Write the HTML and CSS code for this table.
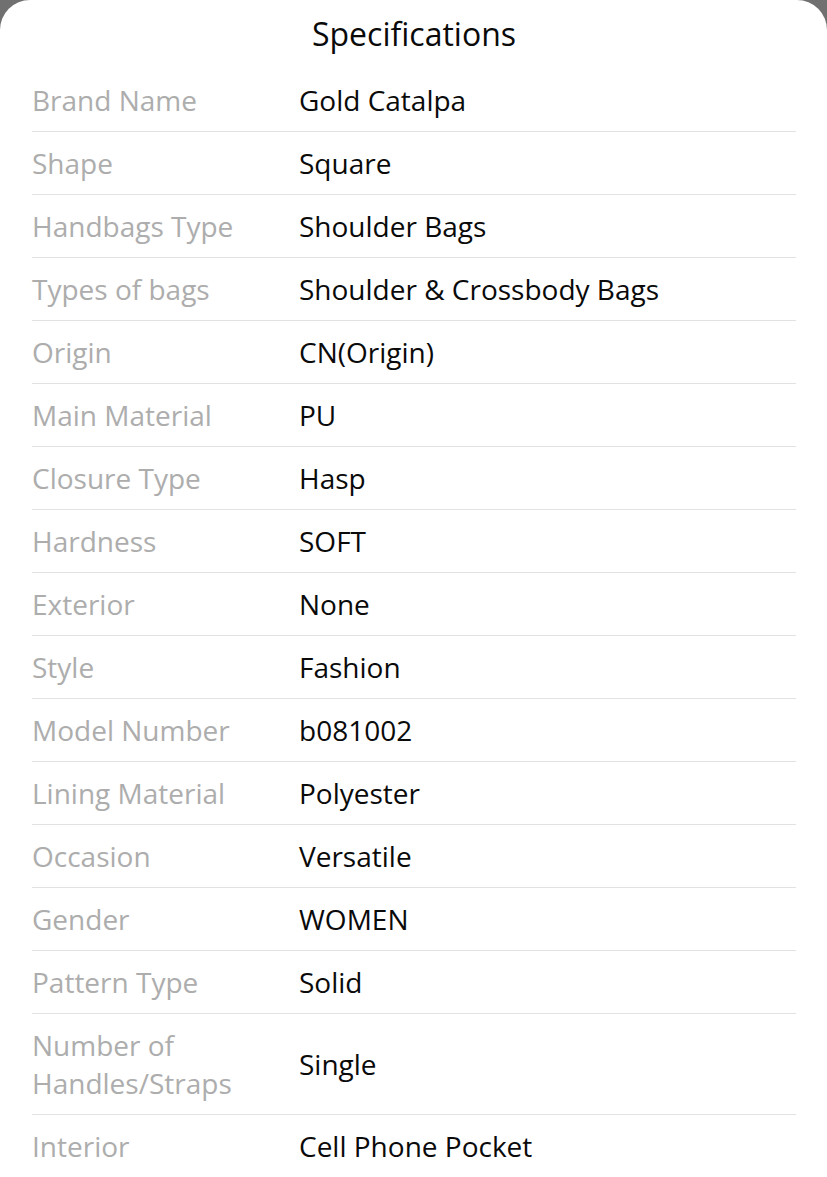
FILE: index.html
```html
<!DOCTYPE html>
<html lang="en">
<head>
<meta charset="utf-8">
<title>Specifications</title>
<link rel="stylesheet" href="styles.css">
</head>
<body>
<div class="sheet">
  <h1 class="title">Specifications</h1>
  <div class="specs">
    <div class="row"><div class="label">Brand Name</div><div class="value">Gold Catalpa</div></div>
    <div class="row"><div class="label">Shape</div><div class="value">Square</div></div>
    <div class="row"><div class="label">Handbags Type</div><div class="value">Shoulder Bags</div></div>
    <div class="row"><div class="label">Types of bags</div><div class="value">Shoulder &amp; Crossbody Bags</div></div>
    <div class="row"><div class="label">Origin</div><div class="value">CN(Origin)</div></div>
    <div class="row"><div class="label">Main Material</div><div class="value">PU</div></div>
    <div class="row"><div class="label">Closure Type</div><div class="value">Hasp</div></div>
    <div class="row"><div class="label">Hardness</div><div class="value">SOFT</div></div>
    <div class="row"><div class="label">Exterior</div><div class="value">None</div></div>
    <div class="row"><div class="label">Style</div><div class="value">Fashion</div></div>
    <div class="row"><div class="label">Model Number</div><div class="value">b081002</div></div>
    <div class="row"><div class="label">Lining Material</div><div class="value">Polyester</div></div>
    <div class="row"><div class="label">Occasion</div><div class="value">Versatile</div></div>
    <div class="row"><div class="label">Gender</div><div class="value">WOMEN</div></div>
    <div class="row"><div class="label">Pattern Type</div><div class="value">Solid</div></div>
    <div class="row"><div class="label">Number of Handles/Straps</div><div class="value">Single</div></div>
    <div class="row"><div class="label">Interior</div><div class="value">Cell Phone Pocket</div></div>
  </div>
</div>
</body>
</html>
```
FILE: styles.css
```css
html, body {
  margin: 0;
  padding: 0;
  background: #707070;
  height: 100%;
  overflow: hidden;
}
.sheet {
  background: #ffffff;
  border-radius: 30px 30px 0 0;
  min-height: 100vh;
  padding: 0 31px 0 32px;
  font-family: "Open Sans", "Liberation Sans", sans-serif;
}
.title {
  margin: 0;
  height: 69px;
  line-height: 68px;
  text-align: center;
  font-size: 32px;
  font-weight: 400;
  color: #0a0a0a;
}
.specs {
  display: flex;
  flex-direction: column;
}
.row {
  display: grid;
  grid-template-columns: 267px 1fr;
  align-items: center;
  padding: 12px 0;
  border-bottom: 1px solid #e2e2e2;
  font-size: 28px;
  line-height: 38px;
}
.row:last-child {
  border-bottom: none;
}
.label {
  color: #adadad;
  padding-right: 30px;
}
.value {
  color: #0a0a0a;
}
```
